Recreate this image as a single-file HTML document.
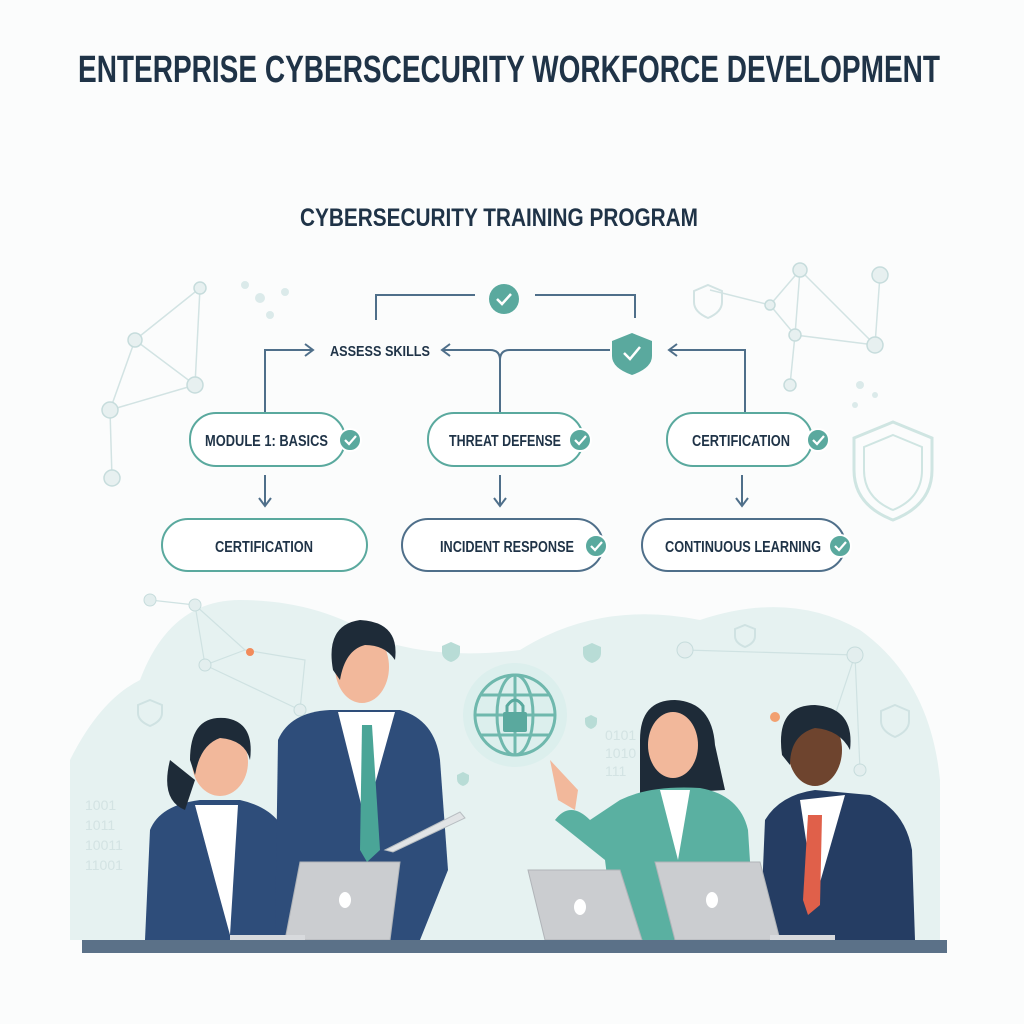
<!DOCTYPE html>
<html><head><meta charset="utf-8"><style>
html,body{margin:0;padding:0;background:#fbfcfc;}
svg{display:block}
text{font-family:"Liberation Sans",sans-serif;}
</style></head><body>
<svg width="1024" height="1024" viewBox="0 0 1024 1024" xmlns="http://www.w3.org/2000/svg">
<rect width="1024" height="1024" fill="#fbfcfc"/>
<text x="78" y="82" font-size="38" font-weight="bold" fill="#1f3347" textLength="862" lengthAdjust="spacingAndGlyphs">ENTERPRISE CYBERSCECURITY WORKFORCE DEVELOPMENT</text>
<text x="300" y="226" font-size="25" font-weight="bold" fill="#1f3347" textLength="398" lengthAdjust="spacingAndGlyphs">CYBERSECURITY TRAINING PROGRAM</text>

<g stroke="#d2e3e3" stroke-width="1.5" fill="none">
<path d="M110 410 L135 340 L200 288 L195 385 L110 410 M135 340 L195 385 M110 410 L112 478"/>
<path d="M800 270 L770 305 L710 290 M800 270 L875 345 L795 335 L790 385 M800 270 L795 335 L770 305 M875 345 L880 275"/>
</g>
<g fill="#e7f0f0" stroke="#c6dcdc" stroke-width="1.5">
<circle cx="135" cy="340" r="7"/><circle cx="200" cy="288" r="6"/><circle cx="195" cy="385" r="8"/><circle cx="110" cy="410" r="8"/><circle cx="112" cy="478" r="8"/>
<circle cx="800" cy="270" r="7"/><circle cx="770" cy="305" r="5"/><circle cx="875" cy="345" r="8"/><circle cx="795" cy="335" r="6"/><circle cx="790" cy="385" r="6"/><circle cx="880" cy="275" r="8"/>
</g>
<g fill="#dbeaea"><circle cx="245" cy="285" r="4"/><circle cx="260" cy="298" r="5"/><circle cx="285" cy="292" r="4"/><circle cx="270" cy="315" r="4"/><circle cx="860" cy="385" r="4"/><circle cx="875" cy="395" r="3"/><circle cx="855" cy="405" r="3"/></g>
<path d="M893 422 L932 438 L932 470 Q932 505 893 520 Q854 505 854 470 L854 438 Z" fill="none" stroke="#cfe5e2" stroke-width="3"/>
<path d="M893 435 L922 447 L922 470 Q922 498 893 510 Q864 498 864 470 L864 447 Z" fill="none" stroke="#cfe5e2" stroke-width="2"/>
<path d="M708 285 L722 291 L722 302 Q722 312 708 318 Q694 312 694 302 L694 291 Z" fill="none" stroke="#d2e3e3" stroke-width="2"/>

<g stroke="#4f6f8a" stroke-width="2" fill="none">
<path d="M376 320 L376 295 L475 295"/><path d="M535 295 L635 295 L635 318"/>
<path d="M265 413 L265 350 L312 350"/><path d="M305 344 L313 350 L305 356"/>
<path d="M500 413 L500 360 Q500 350 490 350 L443 350"/><path d="M450 344 L442 350 L450 356"/>
<path d="M500 360 Q500 350 510 350 L610 350"/>
<path d="M745 413 L745 350 L670 350"/><path d="M677 344 L669 350 L677 356"/>
<path d="M265 475 L265 505 M259 498 L265 506 L271 498"/>
<path d="M500 475 L500 505 M494 498 L500 506 L506 498"/>
<path d="M742 475 L742 505 M736 498 L742 506 L748 498"/>
</g>
<text x="330" y="356" font-size="15" font-weight="bold" fill="#1f3347" textLength="100" lengthAdjust="spacingAndGlyphs">ASSESS SKILLS</text>
<circle cx="504" cy="299" r="15" fill="#5aa99e"/>
<path d="M497 299 L502 304 L511 294" stroke="#fff" stroke-width="2.5" fill="none"/>
<path d="M632 333 L652 341 L652 356 Q652 368 632 375 Q612 368 612 356 L612 341 Z" fill="#5aa99e"/>
<path d="M624 353 L630 359 L640 347" stroke="#fff" stroke-width="2.5" fill="none"/>

<g fill="#fff" stroke-width="2">
<rect x="190" y="413" width="155" height="53" rx="26" stroke="#5aa99e"/>
<rect x="428" y="413" width="155" height="53" rx="26" stroke="#5aa99e"/>
<rect x="667" y="413" width="145" height="53" rx="26" stroke="#5aa99e"/>
<rect x="162" y="519" width="205" height="52" rx="26" stroke="#5aa99e"/>
<rect x="402" y="519" width="201" height="52" rx="26" stroke="#4f6f8a"/>
<rect x="642" y="519" width="203" height="52" rx="26" stroke="#4f6f8a"/>
</g>
<g font-size="16" fill="#1f3347" font-weight="bold">
<text x="205" y="446" textLength="123" lengthAdjust="spacingAndGlyphs">MODULE 1: BASICS</text>
<text x="449" y="446" textLength="112" lengthAdjust="spacingAndGlyphs">THREAT DEFENSE</text>
<text x="692" y="446" textLength="98" lengthAdjust="spacingAndGlyphs">CERTIFICATION</text>
<text x="215" y="552" textLength="98" lengthAdjust="spacingAndGlyphs">CERTIFICATION</text>
<text x="440" y="552" textLength="134" lengthAdjust="spacingAndGlyphs">INCIDENT RESPONSE</text>
<text x="665" y="552" textLength="156" lengthAdjust="spacingAndGlyphs">CONTINUOUS LEARNING</text>
</g>
<g fill="#5aa99e" stroke="#fff" stroke-width="2">
<circle cx="350" cy="440" r="11"/><circle cx="580" cy="440" r="11"/><circle cx="818" cy="440" r="11"/><circle cx="596" cy="546" r="11"/><circle cx="840" cy="546" r="11"/>
</g>
<g stroke="#fff" stroke-width="2.2" fill="none">
<path d="M345 440 L349 444 L356 436"/><path d="M575 440 L579 444 L586 436"/><path d="M813 440 L817 444 L824 436"/><path d="M591 546 L595 550 L602 542"/><path d="M835 546 L839 550 L846 542"/>
</g>

<path d="M70 940 L70 760 Q100 700 140 680 Q170 600 240 600 Q320 600 380 640 Q440 660 520 650 Q600 600 700 620 Q790 590 860 630 Q930 680 940 780 L940 940 Z" fill="#e6f2f1"/>
<g stroke="#cfe2e2" stroke-width="1.2" fill="none">
<path d="M150 600 L195 605 L245 650 L305 660 L300 710 M195 605 L205 665 L245 650 M205 665 L300 710 M685 650 L855 655 L830 730 M855 655 L860 770"/>
</g>
<g fill="#e3eeee" stroke="#c6dcdc"><circle cx="150" cy="600" r="6"/><circle cx="195" cy="605" r="6"/><circle cx="205" cy="665" r="6"/><circle cx="300" cy="710" r="6"/><circle cx="685" cy="650" r="8"/><circle cx="855" cy="655" r="8"/><circle cx="860" cy="770" r="6"/></g>
<circle cx="250" cy="652" r="4" fill="#f28b5b"/><circle cx="775" cy="717" r="5" fill="#f2a070"/>
<g font-size="14" fill="#d3e3e3" font-family="Liberation Mono,monospace"><text x="85" y="810">1001</text><text x="85" y="830">1011</text><text x="85" y="850">10011</text><text x="85" y="870">11001</text><text x="605" y="740">0101</text><text x="605" y="758">1010</text><text x="605" y="776">111</text></g>
<g fill="none" stroke="#cfe2e2" stroke-width="2"><path d="M150 700 l12 5 v8 q0 8 -12 13 q-12 -5 -12 -13 v-8 z"/><path d="M895 705 l14 6 v10 q0 10 -14 16 q-14 -6 -14 -16 v-10 z"/><path d="M745 625 l10 4 v7 q0 7 -10 11 q-10 -4 -10 -11 v-7 z"/></g>
<g fill="#b8dcd6"><path d="M451 642 l9 4 v6 q0 7 -9 10 q-9 -3 -9 -10 v-6 z"/><path d="M592 643 l9 4 v6 q0 7 -9 10 q-9 -3 -9 -10 v-6 z"/><path d="M591 715 l6 3 v4 q0 5 -6 7 q-6 -2 -6 -7 v-4 z"/><path d="M463 772 l6 3 v4 q0 5 -6 7 q-6 -2 -6 -7 v-4 z"/></g>

<circle cx="515" cy="715" r="52" fill="#dcefed"/>
<g stroke="#6fb8ad" stroke-width="3" fill="none">
<circle cx="515" cy="715" r="40"/><ellipse cx="515" cy="715" rx="18" ry="40"/><path d="M475 715 H555 M480 695 H550 M480 735 H550 M515 675 V755"/>
</g>
<rect x="503" y="712" width="24" height="20" rx="2" fill="#5aa99e"/>
<path d="M507 712 v-6 q8 -12 16 0 v6" stroke="#5aa99e" stroke-width="3" fill="none"/>

<path d="M145 940 L150 830 Q160 805 200 800 L240 800 Q285 810 290 850 L300 940 Z" fill="#2e4d7a"/>
<path d="M195 805 L215 880 L230 935 L238 805 Z" fill="#fff"/>
<path d="M170 760 Q160 800 185 810 L195 780 Z" fill="#1e2b38"/>
<ellipse cx="220" cy="762" rx="28" ry="34" fill="#f2b89b"/>
<path d="M190 760 Q190 715 225 718 Q255 722 250 760 Q245 740 220 738 Q200 745 195 775 Z" fill="#1e2b38"/>
<path d="M275 940 L278 740 Q290 712 330 710 L400 710 Q435 720 440 760 L448 870 L420 940 Z" fill="#2e4d7a"/>
<path d="M338 712 L365 820 L395 712 Z" fill="#fff"/>
<path d="M362 725 L372 725 L380 850 L367 862 L360 850 Z" fill="#4aa597"/>
<ellipse cx="362" cy="667" rx="27" ry="36" fill="#f2b89b"/>
<path d="M333 670 Q325 625 360 620 Q400 622 395 660 Q385 645 365 645 Q345 650 340 680 Z" fill="#1e2b38"/>
<path d="M385 850 L460 812 L465 818 L393 852 Z" fill="#e1e4e6" stroke="#b8bec2"/>
<path d="M640 740 Q640 700 675 700 Q712 702 715 745 L725 790 L640 795 Z" fill="#1e2b38"/>
<ellipse cx="673" cy="745" rx="25" ry="33" fill="#f2b89b"/>
<path d="M555 820 Q570 800 590 820 L620 800 Q650 785 700 788 Q740 795 748 830 L755 940 L615 940 L605 860 Z" fill="#5ab0a1"/>
<path d="M660 790 L690 790 L678 860 Z" fill="#fff"/>
<path d="M550 760 L558 800 L575 810 L578 790 Z" fill="#f2b89b"/>
<path d="M760 940 L765 820 Q780 795 815 790 L870 795 Q905 810 912 850 L915 940 Z" fill="#253d63"/>
<path d="M800 800 L815 900 L845 795 Z" fill="#fff"/>
<path d="M808 815 L822 815 L820 905 L808 915 L803 900 Z" fill="#e0604a"/>
<ellipse cx="815" cy="750" rx="27" ry="36" fill="#6e442e"/>
<path d="M782 755 Q775 705 815 705 Q855 708 850 750 Q840 730 815 728 Q790 735 790 765 Z" fill="#1e2b38"/>
<g fill="#cbcdd0" stroke="#b0b4b8">
<path d="M300 862 L400 862 L390 940 L285 940 Z"/>
<path d="M528 870 L620 870 L642 940 L545 940 Z"/>
<path d="M655 862 L760 862 L780 940 L675 940 Z"/>
</g>
<rect x="230" y="935" width="75" height="6" fill="#d8dadd"/>
<rect x="770" y="935" width="65" height="6" fill="#d8dadd"/>
<g fill="#fff"><ellipse cx="345" cy="900" rx="6" ry="8"/><ellipse cx="580" cy="907" rx="6" ry="8"/><ellipse cx="712" cy="900" rx="6" ry="8"/></g>
<rect x="82" y="940" width="865" height="13" fill="#5b7188"/>
</svg>
</body></html>
